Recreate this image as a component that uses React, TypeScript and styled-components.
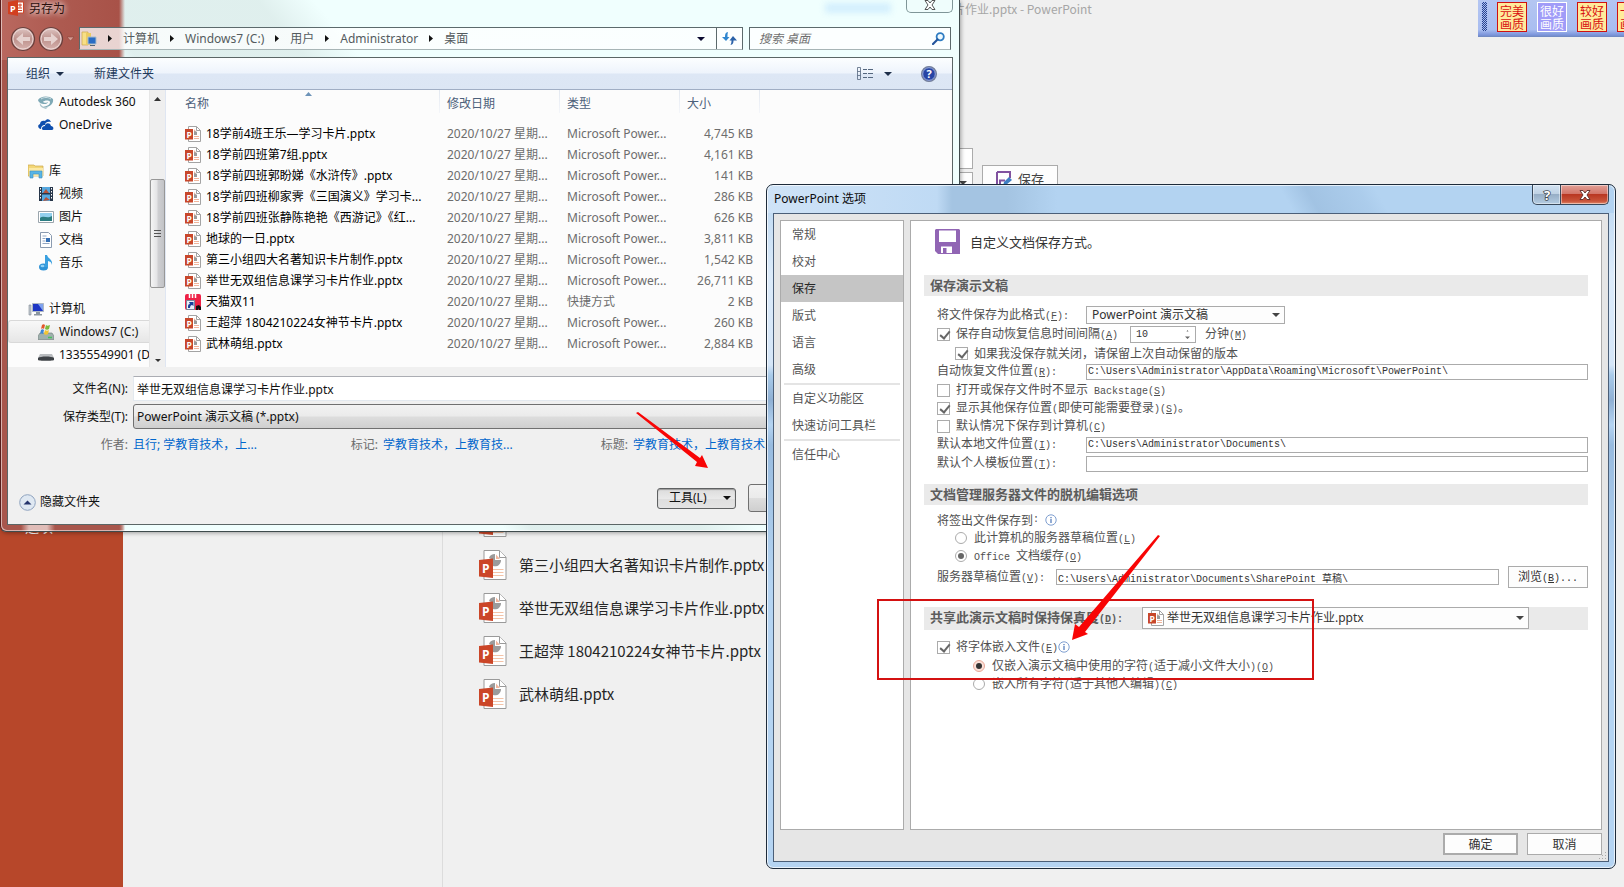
import React from "react";
import styled, { createGlobalStyle, css } from "styled-components";

const uiFont = `"Noto Sans", "Noto Sans CJK SC", sans-serif`;
const cjkFont = `"Noto Sans CJK SC", sans-serif`;
const monoFont = `"Liberation Mono", "Noto Sans CJK SC", monospace`;

const GlobalStyle = createGlobalStyle`
  * { box-sizing: border-box; }
  body { margin: 0; background: #f0f0f0; overflow: hidden; }
  button, input, select { font: inherit; color: inherit; margin: 0; }
  svg { display: block; flex: none; }
`;

/* ---------- Backstage page behind the dialogs ---------- */

const Desktop = styled.div`
  position: relative;
  min-height: 100vh;
  display: flex;
  overflow: hidden;
  background: #f0f0f0;
  font: 12px/18px ${uiFont};
  color: #111;
`;

const Sidebar = styled.nav`
  width: 123px;
  background: #b7472a;
  padding: 516px 0 0 25px;
  a { color: #fff; text-decoration: none; font: 14px/20px ${cjkFont}; }
`;

const Places = styled.div`
  width: 320px;
  border-right: 1px solid #dcdcdc;
`;

const Recent = styled.main`
  flex: 1;
  min-width: 0;
  display: flex;
  flex-direction: column;
`;

const WindowTitle = styled.div`
  padding-left: 498px;
  height: 18px;
  color: #a6a6a6;
  white-space: nowrap;
  font-family: ${cjkFont};
`;

const SaveStrip = styled.div`
  display: flex;
  align-items: flex-start;
  gap: 9px;
  padding: 130px 0 0 480px;
  height: 482px;
`;

const FieldStack = styled.div`
  display: flex;
  flex-direction: column;
  gap: 3px;
  width: 50px;
`;

const BackInput = styled.input`
  width: 100%;
  height: 21px;
  border: 1px solid #ababab;
  background: #fff;
`;

const BackPicker = styled.button`
  display: flex;
  align-items: center;
  justify-content: flex-end;
  height: 21px;
  padding-right: 5px;
  border: 1px solid #ababab;
  background: #fdfdfd;
`;

const BackSave = styled.button`
  display: flex;
  align-items: center;
  gap: 6px;
  width: 76px;
  height: 28px;
  margin-top: 17px;
  padding: 0 0 0 13px;
  border: 1px solid #ababab;
  background: #fdfdfd;
  color: #444;
  font: 13px/18px ${cjkFont};
`;

const RecentList = styled.ul`
  list-style: none;
  margin: 0;
  padding: 0 0 0 36px;
`;

const RecentItem = styled.li`
  display: flex;
  align-items: center;
  gap: 12px;
  height: 43px;
  color: #262626;
  font: 15px/20px ${cjkFont};
  white-space: nowrap;
`;

/* ---------- Capture quality toolbar ---------- */

const QualityBar = styled.div`
  position: absolute;
  top: 0;
  right: 0;
  width: 146px;
  height: 37px;
  display: flex;
  align-items: flex-start;
  gap: 10px;
  padding: 2px 0 0 4px;
  overflow: hidden;
  background: linear-gradient(#b4c6f2, #a9bdf0 80%, #7d96dc 94%, #6f87bd);
`;

const Grip = styled.span`
  flex: none;
  width: 5px;
  height: 29px;
  background: repeating-conic-gradient(#27428f 0 25%, #a9bdf0 0 50%) 0 0 / 2px 2px;
`;

const QualityButton = styled.button<{ $on?: boolean }>`
  flex: none;
  width: 30px;
  height: 30px;
  padding: 1px 2px;
  border: 1px solid ${(p) => (p.$on ? "#fff" : "#d01010")};
  background: ${(p) => (p.$on ? "#a09cf8" : "#ffeb9c")};
  color: ${(p) => (p.$on ? "#fff" : "#d81010")};
  font: 12px/13px ${cjkFont};
`;

/* ---------- Save As dialog ---------- */

const SaveWindow = styled.section`
  position: absolute;
  left: 0;
  top: 0;
  width: calc(100% - 664px);
  padding: 0 6px 6px;
  border: 1px solid #3f4b4d;
  border-left-color: #571d1b;
  border-top: 0;
  border-radius: 0 0 6px 6px;
  box-shadow: inset 1px -1px 0 rgba(255, 255, 255, 0.55), 1px 1px 4px rgba(0, 0, 0, 0.35);
  background:
    linear-gradient(#a8564c, #a8564c) 0 60px / 7px 100% no-repeat,
    linear-gradient(90deg, #a8564c 0 20px, #e0bdb8 28px 46px, #a8564c 54px 116px, rgba(240, 255, 254, 0) 124px) 0 100% / 100% 8px no-repeat,
    linear-gradient(90deg, #b9685f 0, #ad5a50 60px, #a85248 118px, rgba(240, 255, 254, 0) 124px),
    linear-gradient(50deg, transparent 0 36%, rgba(218, 234, 232, 0.75) 38% 50%, transparent 54%),
    #f0fffe;
`;

const SaveTitle = styled.header`
  display: flex;
  align-items: flex-start;
  height: 27px;
  padding-left: 1px;
  gap: 5px;
  h1 {
    flex: 1;
    margin: 0;
    font: 12px/16px ${cjkFont};
    color: #2a0f0c;
    text-shadow: 0 0 6px #fff, 0 0 6px rgba(255, 255, 255, 0.7);
  }
`;

const GhostTitle = styled.span`
  width: 66px;
  height: 10px;
  margin: 3px 10px 0 0;
  background: #d3effd;
  filter: blur(3px);
`;

const SaveClose = styled.button`
  display: flex;
  align-items: flex-start;
  justify-content: center;
  width: 47px;
  height: 13px;
  padding: 0;
  border: 1px solid #7f9698;
  border-top: 0;
  border-radius: 0 0 5px 5px;
  background: #effdfc;
`;

const AddressRow = styled.div`
  display: flex;
  align-items: center;
  height: 23px;
  margin-bottom: 7px;
  padding: 0 2px;
`;

const Crumbs = styled.div`
  flex: 1;
  display: flex;
  align-items: center;
  gap: 11px;
  height: 23px;
  margin-left: 4px;
  padding-left: 1px;
  border: 1px solid #5c6a6c;
  border-bottom-color: #a7b5b6;
  background: linear-gradient(90deg, rgba(255, 255, 255, 0.75) 0 40px, rgba(255, 255, 255, 0.7));
  color: #545b5e;
  white-space: nowrap;
  a { color: inherit; text-decoration: none; }
`;

const RefreshButton = styled.button`
  align-self: stretch;
  width: 26px;
  padding: 0 0 0 5px;
  border: 0;
  border-left: 1px solid #5c6a6c;
  background: rgba(255, 255, 255, 0.4);
`;

const PushRight = styled.span`
  margin-left: auto;
`;

const SearchBox = styled.label`
  display: flex;
  align-items: center;
  width: 202px;
  height: 23px;
  margin-left: 6px;
  padding: 0 5px 0 9px;
  border: 1px solid #5c6a6c;
  border-bottom-color: #a7b5b6;
  background: #fcffff;
  input {
    flex: 1;
    min-width: 0;
    padding: 0;
    border: 0;
    outline: 0;
    background: none;
    font-style: italic;
  }
  input::placeholder { color: #707070; opacity: 1; }
`;

const SaveClient = styled.div`
  border: 1px solid #5b6666;
  background: #f0f0f0;
`;

const CommandBar = styled.div`
  display: flex;
  align-items: center;
  height: 32px;
  padding: 0 15px 0 18px;
  border-bottom: 1px solid #a0aec4;
  background: linear-gradient(#fcfeff, #eef4fc 48%, #dde7f5 52%, #dce6f4);
  color: #1e395b;
`;

const CommandButton = styled.button`
  display: flex;
  align-items: center;
  gap: 6px;
  margin-right: 30px;
  padding: 0;
  border: 0;
  background: none;
`;

const IconButton = styled.button`
  display: flex;
  align-items: center;
  gap: 11px;
  margin-left: 29px;
  padding: 0;
  border: 0;
  background: none;
`;

const Browser = styled.div`
  display: flex;
  height: 277px;
  background: #fcfcfc;
`;

const Tree = styled.ul`
  width: 141px;
  margin: 0;
  padding: 0;
  overflow: hidden;
  list-style: none;
`;

const TreeItem = styled.li<{ $depth?: number; $selected?: boolean }>`
  display: flex;
  align-items: center;
  gap: 5px;
  height: 23px;
  padding-left: ${(p) => (p.$depth ? 30 : 20)}px;
  white-space: nowrap;
  ${(p) =>
    p.$selected &&
    css`
      border: 1px solid #d9d9d9;
      border-right: 0;
      border-radius: 3px 0 0 3px;
      padding-left: 29px;
      background: linear-gradient(#f8f8f8, #e6e6e6);
    `}
`;

const Scroller = styled.div`
  display: flex;
  flex-direction: column;
  align-items: center;
  width: 16px;
  padding: 7px 0 5px;
  background: #efefef;
  border-left: 1px solid #e6e6e6;
`;

const Thumb = styled.div`
  display: flex;
  align-items: center;
  justify-content: center;
  width: 15px;
  height: 109px;
  margin: 78px 0 auto;
  border: 1px solid #979797;
  border-radius: 2px;
  background: linear-gradient(90deg, #f5f5f5, #e4e4e6 45%, #cfcfd2 55%, #c2c3c6);
`;

const FilePane = styled.div`
  flex: 1;
  min-width: 0;
  border-left: 1px solid #dfe6f2;
  overflow: hidden;
`;

const FileTable = styled.table`
  table-layout: fixed;
  width: 594px;
  border-collapse: collapse;
  th {
    position: relative;
    height: 33px;
    padding: 0 0 6px 7px;
    background: linear-gradient(#e3e8f0, #f4f6fa) 100% 0 / 1px 23px no-repeat;
    color: #4c607a;
    font-weight: 400;
    text-align: left;
  }
  th:first-child { padding-left: 19px; }
  td {
    height: 21px;
    padding: 0 7px;
    color: #6d6d6d;
    white-space: nowrap;
    overflow: hidden;
  }
  td:first-child { padding: 0 0 0 19px; color: #000; }
  td:last-child { text-align: right; }
`;

const SortMark = styled.svg`
  position: absolute;
  top: 2px;
  left: 139px;
`;

const FileName = styled.span`
  display: flex;
  align-items: center;
  gap: 5px;
`;

const SaveForm = styled.form`
  display: flex;
  flex-direction: column;
  gap: 3px;
  padding: 9px 0 12px;
`;

const FormRow = styled.div`
  display: flex;
  align-items: center;
  gap: 5px;
  height: 25px;
  label { width: 120px; text-align: right; }
`;

const NameInput = styled.input`
  flex: 1;
  height: 25px;
  padding: 0 3px;
  border: 1px solid #e3e9ef;
  border-top-color: #abadb3;
  background: #fff;
`;

const TypeSelect = styled.select`
  flex: 1;
  appearance: none;
  height: 25px;
  padding: 0 3px;
  border: 1px solid #707070;
  border-radius: 3px;
  background: linear-gradient(#f2f2f2, #ebebeb 48%, #dddddd 52%, #cfcfcf);
`;

const MetaRow = styled.dl`
  display: flex;
  height: 25px;
  align-items: center;
  margin: 0;
  padding-left: 1px;
  white-space: nowrap;
  dt { width: 119px; text-align: right; color: #6d6d6d; }
  dd { width: 126px; margin: 0 0 0 5px; }
  a { color: #0066cc; text-decoration: none; }
`;

const ActionRow = styled.div`
  display: flex;
  align-items: center;
  height: 28px;
  margin-top: 24px;
  padding: 0 18px 0 11px;
`;

const HideFolders = styled.button`
  display: flex;
  align-items: center;
  gap: 4px;
  width: 638px;
  padding: 8px 0 0;
  border: 0;
  background: none;
`;

const ToolsButton = styled.button`
  display: flex;
  align-items: center;
  justify-content: space-between;
  width: 79px;
  height: 21px;
  padding: 0 4px 0 11px;
  border: 1px solid #5f6162;
  border-radius: 3px;
  background: linear-gradient(#dcdcdc, #e9e9e9 50%, #dedede 52%, #e4e4e4);
  box-shadow: inset 0 1px 1px #9b9b9b;
`;

const CommitButton = styled.button`
  flex: 1;
  height: 28px;
  margin-left: 12px;
  border: 1px solid #707070;
  border-radius: 3px;
  background: linear-gradient(#f2f2f2, #ebebeb 48%, #dddddd 52%, #cfcfcf);
`;

/* ---------- PowerPoint Options dialog ---------- */

const OptionsWindow = styled.section`
  position: absolute;
  left: 766px;
  right: 8px;
  top: 184px;
  bottom: 18px;
  display: flex;
  flex-direction: column;
  padding: 0 6px 6px;
  border: 1px solid #1e2b3a;
  border-radius: 7px;
  box-shadow: inset 0 0 0 1px rgba(255, 255, 255, 0.7);
  background:
    linear-gradient(60deg, transparent 0 61%, rgba(140, 175, 210, 0.45) 64%, rgba(150, 185, 220, 0.25) 70%, transparent 72%) 0 0 / 100% 28px no-repeat,
    linear-gradient(90deg, #cfe3f7, #bfdaf4 170px, #a4c4e2 185px 240px, #b3d3f1 290px) 0 0 / 100% 28px no-repeat,
    linear-gradient(#b9d6f1, #dcebfa 90px, #d5e6f8 180px, #a9cbea 190px, #8fb0d4 215px, #b5d4f2 240px, #98bbdf 260px, #b5d4f2 400px);
`;

const OptionsTitle = styled.header`
  display: flex;
  align-items: flex-start;
  height: 28px;
  h2 {
    flex: 1;
    margin: 0;
    padding: 5px 0 0 1px;
    font: 12px/18px ${uiFont};
    color: #0c0c0c;
  }
`;

const CaptionButton = styled.button<{ $close?: boolean }>`
  display: flex;
  align-items: center;
  justify-content: center;
  width: ${(p) => (p.$close ? 48 : 29)}px;
  height: 20px;
  padding: 0;
  border: 1px solid #39485a;
  border-top: 0;
  border-radius: ${(p) => (p.$close ? "0 0 5px 0" : "0 0 0 5px")};
  ${(p) => p.$close && "border-left: 0;"}
  background: ${(p) =>
    p.$close
      ? "linear-gradient(#e2a097, #d3766a 45%, #b93722 50%, #c9543a 85%, #e18a6c)"
      : "linear-gradient(#d3e3f3, #c0d2e4 45%, #97aec6 50%, #b4cce2)"};
  box-shadow: inset 0 0 0 1px rgba(255, 255, 255, 0.45);
`;

const OptionsClient = styled.div`
  flex: 1;
  display: flex;
  flex-direction: column;
  gap: 3px;
  padding: 6px 6px 6px;
  border: 1px solid #4b5f78;
  background: #e6e6e6;
`;

const Panels = styled.div`
  flex: 1;
  display: flex;
  gap: 6px;
`;

const Panel = styled.div`
  border: 1px solid #ababab;
  background: #fff;
`;

const Categories = styled(Panel).attrs({ as: "nav" })`
  width: 124px;
`;

const Category = styled.a<{ $active?: boolean }>`
  display: block;
  height: 27px;
  padding-left: 11px;
  background: ${(p) => (p.$active ? "#c5c5c5" : "none")};
  color: ${(p) => (p.$active ? "#262626" : "#555")};
  font: 12px/25px ${cjkFont};
  text-decoration: none;
`;

const CategoryRule = styled.hr`
  height: 2px;
  margin: 0 3px;
  border: 0;
  background: #e4e4e4;
`;

const Settings = styled(Panel)`
  flex: 1;
  min-width: 0;
  padding: 0 13px;
  color: #505050;
  font: 12px/18px ${cjkFont};
`;

const Intro = styled.div`
  display: flex;
  align-items: center;
  gap: 10px;
  padding: 8px 0 21px 11px;
  color: #333;
  font-size: 13px;
`;

const SectionBar = styled.h3<{ $tall?: boolean }>`
  display: flex;
  align-items: center;
  height: ${(p) => (p.$tall ? 23 : 21)}px;
  margin: 0;
  padding: 0 0 ${(p) => (p.$tall ? 1 : 2)}px 6px;
  background: #eaeaea;
  color: #5c5c5c;
  font: bold 13px/19px ${cjkFont};
  white-space: nowrap;
`;

const SectionBody = styled.div<{ $top: number; $bottom?: number }>`
  padding: ${(p) => p.$top}px 0 ${(p) => p.$bottom ?? 0}px 13px;
`;

const Row = styled.div<{ $h: number; $indent?: number }>`
  display: flex;
  align-items: center;
  height: ${(p) => p.$h}px;
  padding-left: ${(p) => p.$indent ?? 0}px;
  white-space: nowrap;
`;

const FieldLabel = styled.label<{ $w: number }>`
  flex: none;
  width: ${(p) => p.$w}px;
`;

const Latin = styled.span`
  font-family: ${monoFont};
  font-size: 10px;
`;

const PathInput = styled.input`
  flex: 1;
  min-width: 0;
  height: 16px;
  padding: 0 1px;
  border: 1px solid #ababab;
  background: #fff;
  color: #333;
  font: 10px/14px ${monoFont};
`;

const SelectFrame = styled.span<{ $w: number; $h: number }>`
  display: flex;
  align-items: center;
  gap: 3px;
  width: ${(p) => p.$w}px;
  height: ${(p) => p.$h}px;
  padding: 0 4px 0 5px;
  border: 1px solid #ababab;
  background: #fdfdfd;
  select {
    flex: 1;
    min-width: 0;
    appearance: none;
    padding: 0;
    border: 0;
    background: none;
    color: #333;
    font: 12px/16px ${uiFont};
  }
`;

const Spinner = styled.span`
  display: flex;
  align-items: center;
  width: 66px;
  height: 17px;
  margin: 0 9px 0 12px;
  padding: 0 5px;
  border: 1px solid #ababab;
  input {
    flex: 1;
    min-width: 0;
    padding: 0;
    border: 0;
    background: none;
    color: #333;
    font: 10px/14px ${monoFont};
  }
`;

const Tick = styled.input.attrs({ type: "checkbox" })`
  appearance: none;
  flex: none;
  width: 13px;
  height: 13px;
  margin-right: 6px;
  border: 1px solid #ababab;
  background: #fff;
  &:checked::after {
    content: "";
    display: block;
    width: 4px;
    height: 8px;
    margin: 0 0 0 4px;
    border: solid #666;
    border-width: 0 2px 2px 0;
    transform: rotate(40deg);
  }
`;

const Radio = styled.input.attrs({ type: "radio" })<{ $hot?: boolean }>`
  appearance: none;
  flex: none;
  width: 12px;
  height: 12px;
  margin-right: 7px;
  border: 1px solid ${(p) => (p.$hot ? "#e8a898" : "#ababab")};
  border-radius: 50%;
  background: ${(p) => (p.$hot ? "#fbe0d8" : "#fff")};
  &:checked::after {
    content: "";
    display: block;
    width: 6px;
    height: 6px;
    margin: 2px;
    border-radius: 50%;
    background: ${(p) => (p.$hot ? "#333" : "#666")};
  }
`;

const FlatButton = styled.button<{ $w: number; $primary?: boolean }>`
  flex: none;
  width: ${(p) => p.$w}px;
  height: 22px;
  padding: 0;
  border: ${(p) => (p.$primary ? 2 : 1)}px solid #ababab;
  background: #fdfdfd;
  color: #333;
  font: 12px/16px ${cjkFont};
`;

const BrowseButton = styled(FlatButton)`
  margin-left: 9px;
`;

const Footer = styled.footer`
  display: flex;
  justify-content: flex-end;
  gap: 9px;
`;

const ResizeGrip = styled.svg`
  position: absolute;
  right: 8px;
  bottom: 8px;
`;

/* ---------- Red annotations ---------- */

const Arrow = styled.svg<{ $x: number; $y: number }>`
  position: absolute;
  left: ${(p) => p.$x}px;
  top: ${(p) => p.$y}px;
  pointer-events: none;
`;

const RedFrame = styled.div`
  position: absolute;
  left: 110px;
  top: 414px;
  width: 437px;
  height: 81px;
  border: 2px solid #d41111;
  pointer-events: none;
`;

/* ---------- Icons ---------- */

const Down = ({ w = 8, color = "#1e2f4a" }: { w?: number; color?: string }) => (
  <svg width={w} height={w / 2} viewBox="0 0 8 4"><path d="M0 0h8L4 4z" fill={color} /></svg>
);

const CrumbArrow = () => (
  <svg width="4" height="7" viewBox="0 0 4 7"><path d="M0 0l4 3.5L0 7z" fill="#111" /></svg>
);

const PptLarge = () => (
  <svg width="28" height="30" viewBox="0 0 28 30">
    <path d="M5 .5h15.500l6.500 6.500v22.500H5z" fill="#fff" stroke="#9a9a9a" />
    <path d="M20.500 .5v7H27" fill="#fff" stroke="#9a9a9a" />
    <path d="M10 8c1-3 3-4 6-4v6h6a6 6 0 0 1-8 6V10z" fill="#9b9b9b" />
    <path d="M17 9V4.500l4 4.500z" fill="#f0b59c" />
    <path d="M14 19.500h10.500M14 22.500h10.500M14 25.500h10.500" stroke="#f3c3a8" />
    <path d="M0 10l14-1.500V28L0 26.500z" fill="#cb4628" />
    <text x="3" y="23" fontFamily="Open Sans" fontWeight="700" fontSize="12" fill="#fff">P</text>
  </svg>
);

const PptSmall = () => (
  <svg width="16" height="16" viewBox="0 0 16 16">
    <path d="M3.500 .5h8l4 4v11h-12z" fill="#fff" stroke="#a3a3a3" />
    <path d="M11.500 .5v4h4" fill="none" stroke="#a3a3a3" />
    <path d="M9 4l3 2v3H9z" fill="#9b9b9b" /><path d="M9 3v2l2 1z" fill="#f0b59c" />
    <path d="M9 10.500h5M9 12.500h5" stroke="#f0b59c" />
    <path d="M0 3h8v10.500H0z" fill="#c8472b" />
    <text x="1.500" y="11.500" fontFamily="Open Sans" fontWeight="700" fontSize="8.500" fill="#fff">P</text>
  </svg>
);

const PptApp = () => (
  <svg width="16" height="16" viewBox="0 0 16 16">
    <path d="M8 2h7.500v11H8z" fill="#fff" stroke="#d0462a" />
    <path d="M10 5h4M10 8h4M10 10.500h4M12 3.500v4" stroke="#d0462a" />
    <path d="M0 2l10-2v16L0 14z" fill="#d23f20" />
    <text x="2" y="11.500" fontFamily="Open Sans" fontWeight="700" fontSize="9" fill="#fff">P</text>
  </svg>
);

const NavCircles = () => (
  <svg width="66" height="26" viewBox="0 0 66 26">
    <defs>
      <linearGradient id="orb" x1="0" y1="0" x2="0" y2="1">
        <stop offset="0" stopColor="#e0c8c5" /><stop offset=".5" stopColor="#bd918c" /><stop offset="1" stopColor="#d9b5b1" />
      </linearGradient>
    </defs>
    {[14, 42].map((x) => (
      <circle key={x} cx={x} cy="13" r="11.500" fill="url(#orb)" stroke="#673e3b" strokeWidth="1.200" />
    ))}
    <circle cx="14" cy="13" r="10" fill="none" stroke="#ecd8d6" />
    <circle cx="42" cy="13" r="10" fill="none" stroke="#ecd8d6" />
    <path d="M7 13l7-6v4h7v4h-7v4z" fill="#e6d2cf" />
    <path d="M49 13l-7-6v4h-7v4h7v4z" fill="#e6d2cf" />
    <path d="M58 11h7l-3.500 4z" fill="#d59a92" stroke="#8a433b" strokeWidth=".6" />
  </svg>
);

const FolderDesk = () => (
  <svg width="16" height="16" viewBox="0 0 16 16">
    <path d="M1 1h6v13H1z" fill="#f7df86" stroke="#caa64a" strokeWidth=".7" />
    <path d="M5 2h5v12H5z" fill="#eccb62" />
    <path d="M7 6h8v7H7z" fill="#2b6cc4" stroke="#a9bccd" /><path d="M9 14h5v1H9z" fill="#567" />
  </svg>
);

const Refresh = () => (
  <svg width="15" height="13" viewBox="0 0 15 13">
    <path d="M6 0C3.500 .5 3 2 3 5H0l4 4 3.500-4H5.500C5.500 3 5.500 1.500 6 0z" fill="#2f86cf" />
    <path d="M8.500 13c2.500-.5 3-2 3-4.500H15L11 4 7.500 8.500h2c0 2-.3 3-1 4.500z" fill="#2b62a8" />
  </svg>
);

const Magnifier = () => (
  <svg width="13" height="13" viewBox="0 0 13 13">
    <circle cx="8.200" cy="4.800" r="3.600" fill="#eefaff" stroke="#2e7cc2" strokeWidth="1.800" />
    <path d="M5.500 7.500L1 12" stroke="#23549b" strokeWidth="2.200" strokeLinecap="round" />
  </svg>
);

const ViewList = () => (
  <svg width="16" height="13" viewBox="0 0 16 13" fill="none" stroke="#55677f">
    <path d="M.5 .5h3v12h-3zM.5 4.500h3M.5 8.500h3" strokeWidth=".8" />
    <path d="M6 2.500h4M6 6.500h4M6 10.500h4M11 2.500h5M11 6.500h5M11 10.500h5" />
  </svg>
);

const Help = () => (
  <svg width="16" height="16" viewBox="0 0 16 16">
    <circle cx="8" cy="8" r="7.400" fill="#2745a5" stroke="#76809a" strokeWidth="1.200" />
    <circle cx="8" cy="8" r="6.300" fill="none" stroke="#b8c5ea" strokeWidth=".8" />
    <text x="8" y="12" textAnchor="middle" fontFamily="Open Sans" fontWeight="700" fontSize="11" fill="#fff">?</text>
  </svg>
);

const Autodesk = () => (
  <svg width="16" height="16" viewBox="0 0 16 16">
    <path d="M0 6c2-4 11-5 15-1 1 5-4 9-10 8 4-1 7-2 7-5 0-2-6-2-7 0 1 1 4 1 5 0 0 3-9 3-10-2z" fill="#7fa9b6" />
    <path d="M2 9c1 3 4 5 8 4l-2 2C4 14 1 12 2 9z" fill="#a9c3cb" />
    <path d="M3 5c3-2 7-2 10 0" stroke="#cfe0e5" fill="none" />
  </svg>
);

const OneDrive = () => (
  <svg width="16" height="16" viewBox="0 0 16 16" fill="#0f4fae">
    <path d="M3 12C0 12-1 8 2 7c0-3 3-4 5-3 2-3 5-2 6 1-4-1-6 1-6 3-3 0-4 2-4 4z" />
    <path d="M5 13c-2-1-1-4 2-4 0-3 5-4 6 0 3 0 3 4 1 4z" />
  </svg>
);

const Library = () => (
  <svg width="16" height="16" viewBox="0 0 16 16">
    <path d="M0 2h6l1 1h8v10H0z" fill="#f3d777" stroke="#cba84c" strokeWidth=".7" />
    <path d="M1 5h14v8H1z" fill="#fbe9a5" />
    <path d="M2 8h12v7h-3v-4H5v4H2z" fill="#58b5e6" stroke="#3c8fc0" strokeWidth=".6" />
  </svg>
);

const Video = () => (
  <svg width="16" height="16" viewBox="0 0 16 16">
    <path d="M1 1h14v14H1z" fill="#27364a" /><path d="M4 1h8v6H4zM4 8.500h8V15H4z" fill="#56a8df" />
    <path d="M5 7l3-4 3 4zM5 15l3-4 4 3z" fill="#b4533a" />
    <path d="M2.500 2v12M13.500 2v12" stroke="#fff" strokeDasharray="1.500 1.500" />
  </svg>
);

const Picture = () => (
  <svg width="16" height="16" viewBox="0 0 16 16">
    <path d="M.5 2.500h15v11H.5z" fill="#fff" stroke="#9aa5ad" /><path d="M2 4h12v8H2z" fill="#93d0ee" />
    <path d="M2 9c4-3 7 1 12-2v5H2z" fill="#2b7d82" />
  </svg>
);

const Doc = () => (
  <svg width="16" height="16" viewBox="0 0 16 16">
    <path d="M2.500 .5h8l3 3v12h-11z" fill="#fff" stroke="#8b9bb0" />
    <path d="M4.500 4h4M4.500 6.500h3M4.500 9h3M4.500 11.500h7" stroke="#93a7c2" /><path d="M8 6h4v4H8z" fill="#346fb5" />
  </svg>
);

const Music = () => (
  <svg width="16" height="16" viewBox="0 0 16 16">
    <ellipse cx="5.500" cy="12" rx="4.500" ry="3.500" fill="#2d92d6" />
    <path d="M7 12V0h2c1 4 6 4 5 10-.5-3-2-3.500-4-4v6z" fill="#3aa0e0" />
    <ellipse cx="4.500" cy="11" rx="2" ry="1.200" fill="#8fd0f5" />
  </svg>
);

const Computer = () => (
  <svg width="16" height="16" viewBox="0 0 16 16">
    <path d="M1 4h2v10H1z" fill="#c3cbd2" stroke="#7c8791" strokeWidth=".6" />
    <path d="M4.500 2.500h11v8h-11z" fill="#1d36c4" stroke="#aeb8c4" /><path d="M10 3l5 0v7z" fill="#7fa2ee" />
    <path d="M8 11h4v2H8zM6 13h8v1.500H6z" fill="#8b969f" />
  </svg>
);

const Drive = () => (
  <svg width="16" height="16" viewBox="0 0 16 16">
    <path d="M2 9h12l2 3v3.500H0V12z" fill="#9fb0ad" stroke="#6d7b79" strokeWidth=".6" /><path d="M10 13.500h4" stroke="#45c25b" strokeWidth="1.500" />
    <path d="M4 1c1-1 2-1 3 0L6 5c-1-1-2-1-3 0z" fill="#e3572b" /><path d="M8 1c1 1 2 1 4 0l-1 4c-1 1-3 1-4 0z" fill="#7cbb3c" />
    <path d="M3 6c1-1 2-1 3 0l-1 4c-1-1-2-1-3 0z" fill="#3a86d8" /><path d="M7 6c1 1 3 1 4 0l-1 4c-1 1-3 1-4 0z" fill="#f4c430" />
  </svg>
);

const Device = () => (
  <svg width="16" height="16" viewBox="0 0 16 16">
    <path d="M2 7h12l2 4H0z" fill="#b9bcbf" /><path d="M0 11c2-2 14-2 16 0v2c0 1-16 1-16 0z" fill="#3e4246" />
  </svg>
);

const Shortcut = () => (
  <svg width="16" height="16" viewBox="0 0 16 16">
    <rect width="16" height="16" rx="2" fill="#ee2146" />
    <path d="M4.500 0v4M7.500 0v4M10.500 0v4" stroke="#fff" strokeWidth="1.500" />
    <path d="M1.500 6.500h8v9h-8z" fill="#e9f0fa" stroke="#77869c" /><path d="M3 14c0-3 0-4 2-4l-1-2h4.500v4L7 11c-1 0-2 1-2 3z" fill="#183f9b" />
    <path d="M11 16v-4l3-1 2 2v3h-2v-2l-1 2z" fill="#111" />
  </svg>
);

const Orb = () => (
  <svg width="17" height="17" viewBox="0 0 17 17">
    <circle cx="8.500" cy="8.500" r="7.800" fill="#dfe8f2" stroke="#8fa3bf" /><path d="M4.500 10.500h8l-4-4z" fill="#25346c" />
  </svg>
);

const Floppy = () => (
  <svg width="25" height="25" viewBox="0 0 25 25">
    <path d="M1 0h23l1 1v24H3l-3-3V1z" fill="#9165b4" />
    <path d="M4 1.500h17V13H4zM6 17.500h11V24H6z" fill="#fff" /><path d="M8 19h3.500v5H8z" fill="#9165b4" />
  </svg>
);

const SaveAsIcon = () => (
  <svg width="16" height="16" viewBox="0 0 16 16">
    <path d="M1 1h13v6M1 1v13h4M3 9.500h6M4 9.500V14" fill="none" stroke="#80519f" strokeWidth="2" />
    <path d="M7 15l1-4 5-5 3 3-6 5z" fill="#3f7fc4" />
  </svg>
);

const Info = () => (
  <svg width="12" height="12" viewBox="0 0 12 12" fill="none" stroke="#7f9fd0">
    <circle cx="6" cy="6" r="5.200" /><path d="M6 5v4M6 3v1.200" stroke="#4b76b8" strokeWidth="1.200" />
  </svg>
);

const Cross = ({ color = "#fff", edge = "#555" }: { color?: string; edge?: string }) => (
  <svg width="12" height="10" viewBox="0 0 12 10">
    <path d="M1 .5h3L6 3l2-2.500h3L8 5l3 4.500H8L6 7 4 9.500H1L4 5z" fill={color} stroke={edge} strokeWidth=".9" />
  </svg>
);

/* ---------- Text with half-width Latin and underlined access keys ---------- */

const Mixed = ({ text }: { text: string }) => (
  <>
    {text.split(/([\x20-\x7e]+)/).map((part, i) => {
      if (i % 2 === 0) return part;
      const [before, key, after] = part.split("_");
      return (
        <Latin key={i}>
          {before}
          {key && <u>{key}</u>}
          {after}
        </Latin>
      );
    })}
  </>
);

const CheckRow = ({ id, text, checked, h = 18, indent, children }: {
  id: string; text: string; checked?: boolean; h?: number; indent?: number; children?: React.ReactNode;
}) => (
  <Row $h={h} $indent={indent}>
    <Tick id={id} defaultChecked={checked} />
    <label htmlFor={id}><Mixed text={text} /></label>
    {children}
  </Row>
);

const RadioRow = ({ id, name, text, checked, hot, indent }: {
  id: string; name: string; text: string; checked?: boolean; hot?: boolean; indent: number;
}) => (
  <Row $h={18} $indent={indent}>
    <Radio id={id} name={name} defaultChecked={checked} $hot={hot} />
    <label htmlFor={id}><Mixed text={text} /></label>
  </Row>
);

const PathRow = ({ id, text, value }: { id: string; text: string; value: string }) => (
  <Row $h={19}>
    <FieldLabel $w={149} htmlFor={id}><Mixed text={text} /></FieldLabel>
    <PathInput id={id} defaultValue={value} />
  </Row>
);

/* ---------- Data ---------- */

const ppt = "Microsoft Power...";
const files: [string, string, string][] = [
  ["18学前4班王乐—学习卡片.pptx", ppt, "4,745 KB"],
  ["18学前四班第7组.pptx", ppt, "4,161 KB"],
  ["18学前四班郭盼娣《水浒传》.pptx", ppt, "141 KB"],
  ["18学前四班柳家霁《三国演义》学习卡...", ppt, "286 KB"],
  ["18学前四班张静陈艳艳《西游记》《红...", ppt, "626 KB"],
  ["地球的一日.pptx", ppt, "3,811 KB"],
  ["第三小组四大名著知识卡片制作.pptx", ppt, "1,542 KB"],
  ["举世无双组信息课学习卡片作业.pptx", ppt, "26,711 KB"],
  ["天猫双11", "快捷方式", "2 KB"],
  ["王超萍 1804210224女神节卡片.pptx", ppt, "260 KB"],
  ["武林萌组.pptx", ppt, "2,884 KB"],
];

const tree: ([string, React.ReactNode, number] | null)[] = [
  ["Autodesk 360", <Autodesk />, 1],
  ["OneDrive", <OneDrive />, 1],
  null,
  ["库", <Library />, 0],
  ["视频", <Video />, 1],
  ["图片", <Picture />, 1],
  ["文档", <Doc />, 1],
  ["音乐", <Music />, 1],
  null,
  ["计算机", <Computer />, 0],
  ["Windows7 (C:)", <Drive />, 1],
  ["13355549901 (D", <Device />, 1],
];

const crumbs = ["计算机", "Windows7 (C:)", "用户", "Administrator", "桌面"];
const recent = ["地球的一日.pptx", "第三小组四大名著知识卡片制作.pptx", "举世无双组信息课学习卡片作业.pptx", "王超萍 1804210224女神节卡片.pptx", "武林萌组.pptx"];

/* ---------- Windows ---------- */

const SaveAsDialog = () => (
  <SaveWindow>
    <SaveTitle>
      <PptApp />
      <h1>另存为</h1>
      <GhostTitle />
      <SaveClose type="button" aria-label="关闭"><Cross color="#fff" edge="#444" /></SaveClose>
    </SaveTitle>
    <AddressRow>
      <NavCircles />
      <Crumbs>
        <FolderDesk />
        {crumbs.map((c) => (
          <React.Fragment key={c}>
            <CrumbArrow />
            <a href="#">{c}</a>
          </React.Fragment>
        ))}
        <PushRight><Down color="#0b0b30" /></PushRight>
        <RefreshButton type="button" aria-label="刷新"><Refresh /></RefreshButton>
      </Crumbs>
      <SearchBox>
        <input type="text" placeholder="搜索 桌面" aria-label="搜索 桌面" />
        <Magnifier />
      </SearchBox>
    </AddressRow>
    <SaveClient>
      <CommandBar>
        <CommandButton type="button">组织<Down /></CommandButton>
        <CommandButton type="button">新建文件夹</CommandButton>
        <PushRight />
        <IconButton type="button" aria-label="视图"><ViewList /><Down /></IconButton>
        <IconButton type="button" aria-label="帮助"><Help /></IconButton>
      </CommandBar>
      <Browser>
        <Tree>
          {tree.map((t, i) =>
            t ? (
              <TreeItem key={i} $depth={t[2]} $selected={t[0].startsWith("Windows7")}>{t[1]}{t[0]}</TreeItem>
            ) : (
              <TreeItem key={i} aria-hidden />
            )
          )}
        </Tree>
        <Scroller>
          <svg width="7" height="4" viewBox="0 0 7 4"><path d="M0 4h7L3.500 0z" fill="#333" /></svg>
          <Thumb>
            <svg width="7" height="8" viewBox="0 0 7 8"><path d="M0 .5h7M0 3.500h7M0 6.500h7" stroke="#555" /></svg>
          </Thumb>
          <Down w={6} color="#333" />
        </Scroller>
        <FilePane>
          <FileTable>
            <colgroup><col width="274" /><col width="120" /><col width="120" /><col width="80" /></colgroup>
            <thead>
              <tr>
                <th>
                  名称
                  <SortMark width="7" height="4" viewBox="0 0 7 4"><path d="M0 4h7L3.500 0z" fill="#6d93b8" /></SortMark>
                </th>
                <th>修改日期</th><th>类型</th><th>大小</th>
              </tr>
            </thead>
            <tbody>
              {files.map(([name, kind, size]) => (
                <tr key={name}>
                  <td><FileName>{kind === ppt ? <PptSmall /> : <Shortcut />}{name}</FileName></td>
                  <td>2020/10/27 星期...</td>
                  <td>{kind}</td>
                  <td>{size}</td>
                </tr>
              ))}
            </tbody>
          </FileTable>
        </FilePane>
      </Browser>
      <SaveForm>
        <FormRow>
          <label htmlFor="fname">文件名(N):</label>
          <NameInput id="fname" defaultValue="举世无双组信息课学习卡片作业.pptx" />
        </FormRow>
        <FormRow>
          <label htmlFor="ftype">保存类型(T):</label>
          <TypeSelect id="ftype"><option>PowerPoint 演示文稿 (*.pptx)</option></TypeSelect>
        </FormRow>
        <MetaRow>
          <dt>作者:</dt><dd><a href="#">且行; 学教育技术，上...</a></dd>
          <dt>标记:</dt><dd><a href="#">学教育技术，上教育技...</a></dd>
          <dt>标题:</dt><dd><a href="#">学教育技术，上教育技术...</a></dd>
        </MetaRow>
        <ActionRow>
          <HideFolders type="button"><Orb />隐藏文件夹</HideFolders>
          <ToolsButton type="button">工具(L)<Down color="#111" /></ToolsButton>
          <CommitButton type="button" aria-label="保存" />
        </ActionRow>
      </SaveForm>
    </SaveClient>
    <Arrow $x={634} $y={411} width="76" height="60" viewBox="0 0 76 60">
      <path d="M1 2l2-1 62 46 2-3 6 13-13-2 2-4z" fill="#f80505" />
    </Arrow>
  </SaveWindow>
);

const OptionsDialog = () => (
  <OptionsWindow>
    <OptionsTitle>
      <h2>PowerPoint 选项</h2>
      <CaptionButton type="button" aria-label="帮助">
        <svg width="14" height="18" viewBox="0 0 14 18">
          <text x="7" y="14" textAnchor="middle" fontFamily="Open Sans" fontWeight="700" fontSize="13" fill="#fff" stroke="#444b55" strokeWidth="1.600" paintOrder="stroke">?</text>
        </svg>
      </CaptionButton>
      <CaptionButton type="button" $close aria-label="关闭"><Cross edge="#5a2a28" /></CaptionButton>
    </OptionsTitle>
    <OptionsClient>
      <Panels>
        <Categories>
          <Category href="#">常规</Category>
          <Category href="#">校对</Category>
          <Category href="#" $active>保存</Category>
          <Category href="#">版式</Category>
          <Category href="#">语言</Category>
          <Category href="#">高级</Category>
          <CategoryRule />
          <Category href="#">自定义功能区</Category>
          <Category href="#">快速访问工具栏</Category>
          <CategoryRule />
          <Category href="#">信任中心</Category>
        </Categories>
        <Settings>
          <Intro><Floppy />自定义文档保存方式。</Intro>

          <SectionBar>保存演示文稿</SectionBar>
          <SectionBody $top={9} $bottom={11}>
            <Row $h={20}>
              <FieldLabel $w={149} htmlFor="fmt"><Mixed text="将文件保存为此格式(_F_):" /></FieldLabel>
              <SelectFrame $w={199} $h={18}>
                <select id="fmt"><option>PowerPoint 演示文稿</option></select>
                <Down color="#444" />
              </SelectFrame>
            </Row>
            <CheckRow id="auto" h={19} checked text="保存自动恢复信息时间间隔(_A_)">
              <Spinner>
                <input id="mins" type="text" defaultValue="10" aria-label="分钟" />
                <svg width="5" height="10" viewBox="0 0 5 10" fill="#666"><path d="M1.500 1.500h2L2.500 0zM0 6.500h5L2.500 9z" /></svg>
              </Spinner>
              <label htmlFor="mins"><Mixed text="分钟(_M_)" /></label>
            </CheckRow>
            <CheckRow id="keep" indent={18} checked text="如果我没保存就关闭，请保留上次自动保留的版本" />
            <PathRow id="p1" text="自动恢复文件位置(_R_):" value={"C:\\Users\\Administrator\\AppData\\Roaming\\Microsoft\\PowerPoint\\"} />
            <CheckRow id="c1" text="打开或保存文件时不显示 Backstage(_S_)" />
            <CheckRow id="c2" checked text="显示其他保存位置(即使可能需要登录)(_S_)。" />
            <CheckRow id="c3" text="默认情况下保存到计算机(_C_)" />
            <PathRow id="p2" text="默认本地文件位置(_I_):" value={"C:\\Users\\Administrator\\Documents\\"} />
            <PathRow id="p3" text="默认个人模板位置(_T_):" value="" />
          </SectionBody>

          <SectionBar>文档管理服务器文件的脱机编辑选项</SectionBar>
          <SectionBody $top={6} $bottom={18}>
            <Row $h={18}><Mixed text="将签出文件保存到: " /><Latin>&nbsp;</Latin><Info /></Row>
            <RadioRow id="r1" name="draft" indent={18} text="此计算机的服务器草稿位置(_L_)" />
            <RadioRow id="r2" name="draft" indent={18} checked text="Office 文档缓存(_O_)" />
            <Row $h={24}>
              <FieldLabel $w={119} htmlFor="p4"><Mixed text="服务器草稿位置(_V_):" /></FieldLabel>
              <PathInput id="p4" defaultValue={"C:\\Users\\Administrator\\Documents\\SharePoint 草稿\\"} />
              <BrowseButton type="button" $w={80}><Mixed text="浏览(_B_)..." /></BrowseButton>
            </Row>
          </SectionBody>

          <SectionBar $tall>
            <FieldLabel $w={212} htmlFor="pres"><Mixed text="共享此演示文稿时保持保真度(_D_):" /></FieldLabel>
            <SelectFrame $w={387} $h={22}>
              <PptSmall />
              <select id="pres"><option>举世无双组信息课学习卡片作业.pptx</option></select>
              <Down color="#444" />
            </SelectFrame>
          </SectionBar>
          <SectionBody $top={7}>
            <CheckRow id="embed" h={20} checked text="将字体嵌入文件(_E_)"><Info /></CheckRow>
            <RadioRow id="e1" name="embed" indent={36} checked hot text="仅嵌入演示文稿中使用的字符(适于减小文件大小)(_O_)" />
            <RadioRow id="e2" name="embed" indent={36} text="嵌入所有字符(适于其他人编辑)(_C_)" />
          </SectionBody>
        </Settings>
      </Panels>
      <Footer>
        <FlatButton type="button" $w={75} $primary>确定</FlatButton>
        <FlatButton type="button" $w={75}>取消</FlatButton>
      </Footer>
    </OptionsClient>
    <ResizeGrip width="9" height="9" viewBox="0 0 9 9" fill="#aaa">
      <path d="M7 1h1v1H7zM4 4h1v1H4zM7 4h1v1H7zM1 7h1v1H1zM4 7h1v1H4zM7 7h1v1H7z" />
    </ResizeGrip>
    <RedFrame />
    <Arrow $x={304} $y={349} width="92" height="108" viewBox="0 0 92 108">
      <path d="M87 1l2 1L14 98l3 2-16 6 3-16 4 3z" fill="#f80505" />
    </Arrow>
  </OptionsWindow>
);

export default function App() {
  return (
    <Desktop>
      <GlobalStyle />
      <Sidebar><a href="#">选项</a></Sidebar>
      <Places />
      <Recent>
        <WindowTitle>卡片作业.pptx - PowerPoint</WindowTitle>
        <SaveStrip>
          <FieldStack>
            <BackInput aria-label="文件名" />
            <BackPicker type="button" aria-label="文件类型"><Down color="#444" /></BackPicker>
          </FieldStack>
          <BackSave type="button"><SaveAsIcon />保存</BackSave>
        </SaveStrip>
        <RecentList>
          {recent.map((r) => (
            <RecentItem key={r}><PptLarge />{r}</RecentItem>
          ))}
        </RecentList>
      </Recent>
      <SaveAsDialog />
      <OptionsDialog />
      <QualityBar>
        <Grip />
        <QualityButton type="button">完美画质</QualityButton>
        <QualityButton type="button" $on>很好画质</QualityButton>
        <QualityButton type="button">较好画质</QualityButton>
        <QualityButton type="button">一般画质</QualityButton>
      </QualityBar>
    </Desktop>
  );
}
